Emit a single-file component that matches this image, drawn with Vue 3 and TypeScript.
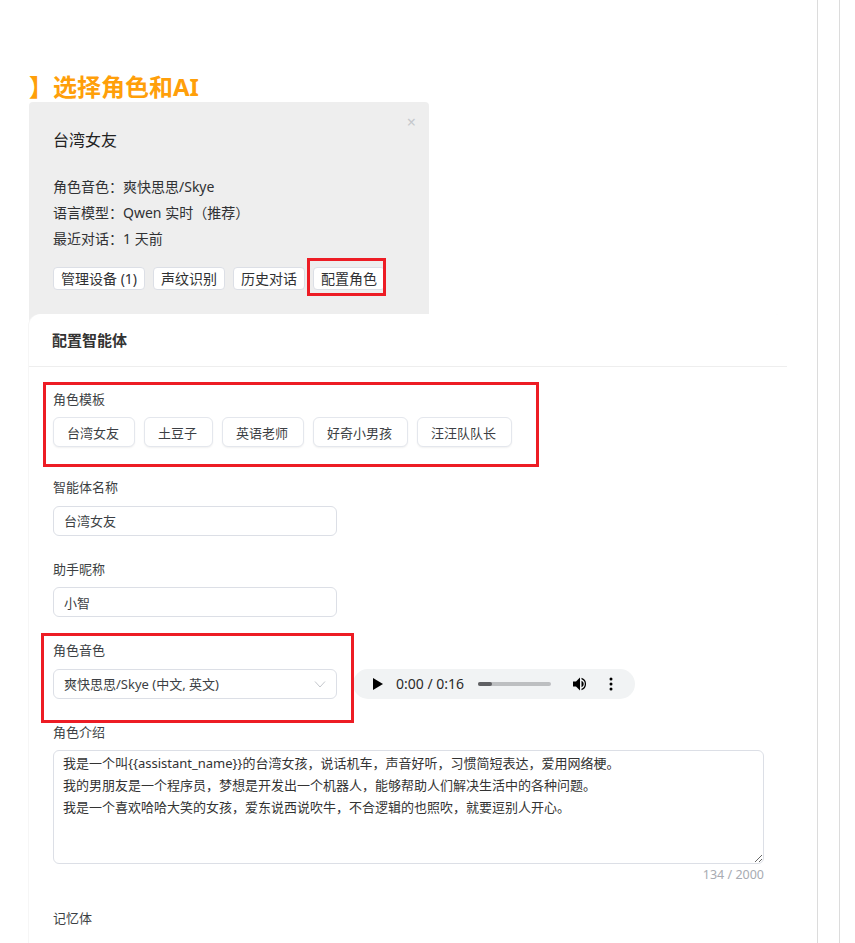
<template>
  <div class="page">
    <main class="main">
      <h2 class="step-title">】选择角色和AI</h2>

      <div class="agent-card">
        <span class="agent-card__close">×</span>
        <div class="agent-card__name">{{ agent.name }}</div>
        <div class="agent-card__info" v-for="row in agent.rows" :key="row">{{ row }}</div>
        <div class="agent-card__actions">
          <button class="agent-card__btn" v-for="action in agent.actions" :key="action">{{ action }}</button>
          <button class="agent-card__btn">配置角色<span class="mark mark--btn"></span></button>
        </div>
      </div>

      <section class="panel">
        <div class="panel__header">配置智能体</div>
        <form class="panel__body" @submit.prevent>
          <div class="field field--templates">
            <span class="mark mark--templates"></span>
            <label class="field__label">角色模板</label>
            <div class="templates">
              <button class="template-btn" v-for="item in templates" :key="item">{{ item }}</button>
            </div>
          </div>

          <div class="field">
            <label class="field__label">智能体名称</label>
            <input class="text-input" value="台湾女友" />
          </div>

          <div class="field">
            <label class="field__label">助手昵称</label>
            <input class="text-input" value="小智" />
          </div>

          <div class="field field--voice">
            <span class="mark mark--voice"></span>
            <label class="field__label">角色音色</label>
            <div class="voice-row">
              <div class="select">
                <span>爽快思思/Skye (中文, 英文)</span>
                <svg width="12" height="12" viewBox="0 0 12 12" fill="none" stroke="#c4c7cc" stroke-width="1">
                  <path d="M1 3.5 6 9l5-5.5" />
                </svg>
              </div>
              <div class="player">
                <svg class="player__play" width="12" height="14" viewBox="0 0 12 14"><path d="M1 1v12l10-6z" fill="#000" /></svg>
                <span class="player__time">0:00 / 0:16</span>
                <div class="player__track"><div class="player__progress" :style="{ width: progress + '%' }"></div></div>
                <svg class="player__volume" width="16" height="16" viewBox="0 0 16 16" fill="#000">
                  <path d="M1 5.5v5h3l4 4V1.500l-4 4z" />
                  <path d="M9.500 4.800v6.400a3.400 3.400 0 0 0 0-6.400z" />
                  <path d="M9.500 1.800v1.500a5 5 0 0 1 0 9.400v1.500a6.500 6.500 0 0 0 0-12.400z" />
                </svg>
                <svg class="player__more" width="4" height="14" viewBox="0 0 4 14" fill="#000">
                  <circle cx="2" cy="2" r="1.500" />
                  <circle cx="2" cy="7" r="1.500" />
                  <circle cx="2" cy="12" r="1.500" />
                </svg>
              </div>
            </div>
          </div>

          <div class="field field--intro">
            <label class="field__label">角色介绍</label>
            <textarea class="textarea" :value="intro"></textarea>
            <div class="counter">{{ intro.length }} / 2000</div>
          </div>

          <div class="field">
            <label class="field__label">记忆体</label>
          </div>
        </form>
      </section>
    </main>
    <div class="gutter"></div>
  </div>
</template>

<script setup lang="ts">
const agent = {
  name: '台湾女友',
  rows: ['角色音色：爽快思思/Skye', '语言模型：Qwen 实时（推荐）', '最近对话：1 天前'],
  actions: ['管理设备 (1)', '声纹识别', '历史对话']
}

const templates = ['台湾女友', '土豆子', '英语老师', '好奇小男孩', '汪汪队队长']

const intro = `我是一个叫{{assistant_name}}的台湾女孩，说话机车，声音好听，习惯简短表达，爱用网络梗。
我的男朋友是一个程序员，梦想是开发出一个机器人，能够帮助人们解决生活中的各种问题。
我是一个喜欢哈哈大笑的女孩，爱东说西说吹牛，不合逻辑的也照吹，就要逗别人开心。`

const progress = 19
</script>

<style>
html,
body {
  margin: 0;
  height: 100%;
  overflow: hidden;
  background: #fff;
}
</style>

<style scoped>
.page {
  display: flex;
  height: 943px;
  overflow: hidden;
  font-family: "Noto Sans", "Noto Sans CJK SC", sans-serif;
  color: #303133;
  font-size: 13px;
}

.main {
  width: 818px;
  box-sizing: border-box;
  flex-shrink: 0;
  padding: 72px 30px 0 29px;
  border-right: 1px solid #dcdcdc;
}

.gutter {
  width: 21px;
  flex-shrink: 0;
  border-right: 1px solid #dcdcdc;
}

.step-title {
  margin: 0;
  height: 30px;
  line-height: 30px;
  font-size: 24px;
  font-weight: 700;
  color: #ff9f0a;
}

.agent-card {
  position: relative;
  width: 400px;
  height: 220px;
  box-sizing: border-box;
  padding: 27px 24px 0;
  background: #eee;
  border-radius: 4px 4px 0 0;
  font-size: 14px;
}

.agent-card__close {
  position: absolute;
  top: 11px;
  right: 13px;
  font-size: 16px;
  line-height: 18px;
  color: #c5c8cc;
}

.agent-card__name {
  font-size: 16px;
  line-height: 22px;
  margin-bottom: 23px;
  color: #222;
}

.agent-card__info {
  height: 26px;
  line-height: 26px;
  color: #303133;
}

.agent-card__actions {
  display: flex;
  gap: 8px;
  margin-top: 15px;
}

.agent-card__btn {
  position: relative;
  height: 23px;
  padding: 0 7px;
  font: inherit;
  line-height: 21px;
  color: #303133;
  background: #fff;
  border: 1px solid #dcdfe6;
  border-radius: 4px;
}

.panel {
  position: relative;
  width: 758px;
  margin-top: -8px;
  background: #fff;
  border-radius: 12px 12px 0 0;
  box-shadow: -1px 0 0 #f6f6f6;
}

.panel::before {
  content: "";
  position: absolute;
  top: 0;
  right: 0;
  width: 7px;
  height: 7px;
  background: #f3f3f3;
  z-index: -1;
}

.panel__header {
  height: 53px;
  line-height: 52px;
  padding-left: 23px;
  box-sizing: border-box;
  font-size: 15px;
  font-weight: 700;
  color: #333;
  border-bottom: 1px solid #eeeeee;
}

.panel__body {
  padding: 23px 24px 40px;
}

.field {
  position: relative;
  margin-bottom: 24px;
}

.field--templates {
  margin-bottom: 31.4px;
}

.field--templates .field__label {
  height: 18px;
}

.field__label {
  display: block;
  height: 18.5px;
  line-height: 19px;
  margin-bottom: 9px;
  color: #3c3f44;
}

.templates {
  display: flex;
  gap: 9px;
}

.template-btn {
  height: 30px;
  padding: 0 15px 0 13px;
  font: inherit;
  color: #3c3f44;
  background: #fff;
  border: 1px solid #e4e7ed;
  border-radius: 6px;
  box-shadow: 0 1px 2px rgba(0, 0, 0, 0.06);
}

.text-input {
  display: block;
  width: 284px;
  height: 30px;
  box-sizing: border-box;
  padding: 0 10px;
  font: inherit;
  color: #3c3f44;
  background: #fff;
  border: 1px solid #dcdfe6;
  border-radius: 6px;
  outline: none;
}

.voice-row {
  display: flex;
  align-items: center;
  gap: 16px;
}

.select {
  display: flex;
  align-items: center;
  justify-content: space-between;
  width: 284px;
  height: 30px;
  box-sizing: border-box;
  padding: 0 10px;
  background: #fff;
  border: 1px solid #dcdfe6;
  border-radius: 6px;
  color: #3c3f44;
}

.player {
  display: flex;
  align-items: center;
  width: 282px;
  height: 30px;
  box-sizing: border-box;
  padding-left: 19px;
  background: #f1f3f4;
  border-radius: 15px;
}

.player__time {
  margin-left: 12px;
  width: 82px;
  font-size: 14px;
  color: #2a2a2a;
  white-space: nowrap;
}

.player__track {
  width: 73px;
  height: 4px;
  background: #bdbfc1;
  border-radius: 2px;
}

.player__progress {
  height: 100%;
  background: #5f6063;
  border-radius: 2px;
}

.player__volume {
  margin-left: 21px;
}

.player__more {
  margin-left: 21px;
}

.textarea {
  display: block;
  width: 711px;
  height: 114px;
  box-sizing: border-box;
  padding: 1px 9px;
  font: inherit;
  line-height: 22px;
  color: #333;
  background: #fff;
  border: 1px solid #dcdfe6;
  border-radius: 6px;
  outline: none;
}

.field--intro {
  width: 711px;
}

.counter {
  height: 20px;
  line-height: 20px;
  margin-top: 1px;
  text-align: right;
  font-size: 12.5px;
  color: #a8abb2;
}

.mark {
  position: absolute;
  box-sizing: border-box;
  border: 3px solid #ed1c24;
  pointer-events: none;
}

.mark--btn {
  inset: -10px -2px -7px -7px;
}

.mark--templates {
  left: -10px;
  top: -8px;
  width: 496px;
  height: 85px;
}

.mark--voice {
  left: -12px;
  top: -8px;
  width: 313px;
  height: 90px;
}
</style>
